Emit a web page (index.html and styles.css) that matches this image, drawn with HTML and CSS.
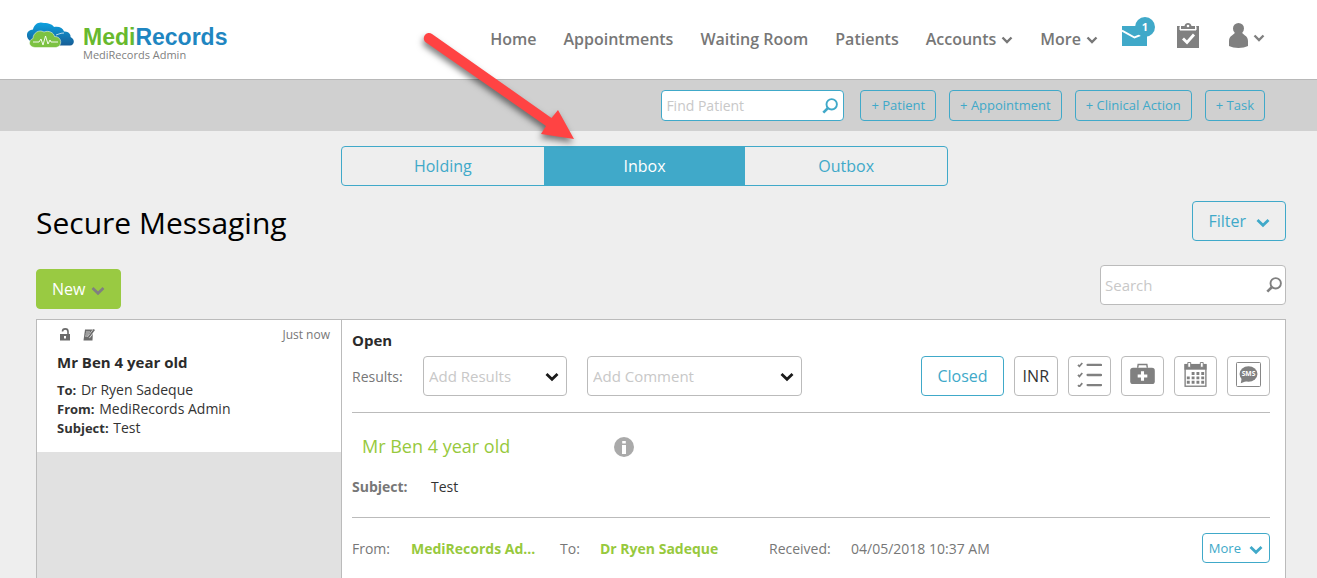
FILE: index.html
```html
<!DOCTYPE html>
<html lang="en">

<head>
    <meta charset="UTF-8">
    <meta name="viewport" content="width=device-width, initial-scale=1.0">
    <title>MediRecords - Secure Messaging</title>
    <link rel="stylesheet" href="styles.css">
</head>

<body>

    <!-- shared icons -->
    <svg class="defs" width="0" height="0" aria-hidden="true">
        <symbol id="chevron" viewBox="0 0 12 8">
            <path d="M1.5 1.5 L6 6 L10.5 1.5" fill="none" stroke="currentColor" stroke-width="2.4" />
        </symbol>
        <symbol id="chevron-bold" viewBox="0 0 14 10">
            <path d="M1.5 2 L7 7.2 L12.5 2" fill="none" stroke="currentColor" stroke-width="2.8" />
        </symbol>
        <symbol id="glass" viewBox="0 0 16 16">
            <circle cx="9.7" cy="6.3" r="5.2" fill="none" stroke="currentColor" stroke-width="1.9" />
            <path d="M6 10 L1.3 14.7" stroke="currentColor" stroke-width="2.6" />
        </symbol>
    </svg>

    <header class="header">
        <a class="logo" href="#">
            <svg class="logo-cloud" viewBox="0 0 47 26" width="47" height="26" aria-hidden="true">
                <defs>
                    <linearGradient id="blue" x1="0" y1="0" x2="0" y2="1">
                        <stop offset="0" stop-color="#0da2e0" />
                        <stop offset="1" stop-color="#175d96" />
                    </linearGradient>
                </defs>
                <path fill="url(#blue)" d="M3 19 C-2 15 -1 8 6 7.500 C7 2 12 -1 17 1 C22 1 26 3 27 5 C32 4 36 6 37 9.500 C42 9 44 13 43.500 15 C48 17 48 23 43 23.500 L30 23.500 Z" />
                <path fill="none" stroke="#fff" stroke-width="0.700" d="M29 13 C32 12 34 11 37 11" />
                <path fill="#7cc242" stroke="#fff" stroke-width="0.500" d="M8 25.500 C1 25 1 18 6 16.500 C6 11 12 7 17 10 C22 8 27 11 27.500 14.500 C35 14 36 24.500 29 25.500 Z" />
                <path fill="none" stroke="#fff" stroke-width="0.900" d="M6 20 H12 L14 17 L16 23 L18.500 14 L21 22 L23 18 L24 20 H31" />
            </svg>
            <span class="logo-text">
                <span class="logo-name"><span class="logo-medi">Medi</span>Records</span>
                <span class="logo-user">MediRecords Admin</span>
            </span>
        </a>
        <nav class="menu">
            <a href="#">Home</a>
            <a href="#">Appointments</a>
            <a href="#">Waiting Room</a>
            <a href="#">Patients</a>
            <a href="#">Accounts <svg class="chevron"><use href="#chevron" /></svg></a>
            <a href="#">More <svg class="chevron"><use href="#chevron" /></svg></a>
        </nav>
        <div class="header-icons">
            <a class="mail" href="#" aria-label="Messages">
                <svg viewBox="0 0 25 20" width="25" height="20">
                    <rect width="25" height="20" fill="#40a9c9" />
                    <path d="M0 4.500 L12.500 11.500 L25 6.500" fill="none" stroke="#fff" stroke-width="2" />
                </svg>
                <span class="badge">1</span>
            </a>
            <a href="#" aria-label="Tasks">
                <svg viewBox="0 0 22 25" width="22" height="25">
                    <path fill="#808080" d="M0 3 H3 V7 H19 V3 H22 V25 H0 Z" />
                    <path fill="#808080" d="M4 3 H7.500 C8 -1 14 -1 14.500 3 H18 V6 H4 Z" />
                    <path fill="none" stroke="#fff" d="M3 3.500 V7 H19 V3.500" />
                    <circle cx="11" cy="3" r="1.300" fill="#fff" />
                    <path d="M6 15.500 L10 19.500 L17 11.500" fill="none" stroke="#fff" stroke-width="2.800" />
                </svg>
            </a>
            <a class="user" href="#" aria-label="My account">
                <svg viewBox="0 0 19 25" width="19" height="25">
                    <circle cx="9.500" cy="5.500" r="5.500" fill="#808080" />
                    <path fill="#808080" d="M6 9 H13 C13 12 19 12 19 18 V23 C14 25.500 5 25.500 0 23 V18 C0 12 6 12 6 9 Z" />
                </svg>
                <svg class="chevron"><use href="#chevron" /></svg>
            </a>
        </div>
    </header>

    <div class="toolbar">
        <form class="search find">
            <input type="text" placeholder="Find Patient" aria-label="Find Patient">
            <svg class="glass"><use href="#glass" /></svg>
        </form>
        <button class="btn btn-small">+ Patient</button>
        <button class="btn btn-small">+ Appointment</button>
        <button class="btn btn-small">+ Clinical Action</button>
        <button class="btn btn-small">+ Task</button>
    </div>

    <main class="main">
        <div class="tabs">
            <button class="tab">Holding</button>
            <button class="tab active">Inbox</button>
            <button class="tab">Outbox</button>
            <svg class="arrow" viewBox="0 0 170 130" width="170" height="130" aria-hidden="true">
                <path d="M6 15.500 L126 99 L121 107 L154 112 L138 83 L131.500 91 L12 7 A5 5 0 0 0 6 15.500 Z" fill="#ff4343" />
            </svg>
        </div>

        <div class="title-row">
            <h1>Secure Messaging</h1>
            <button class="btn">Filter <svg class="chevron-bold"><use href="#chevron-bold" /></svg></button>
        </div>

        <div class="action-row">
            <button class="btn btn-new">New <svg class="chevron-bold"><use href="#chevron-bold" /></svg></button>
            <form class="search">
                <input type="text" placeholder="Search" aria-label="Search">
                <svg class="glass"><use href="#glass" /></svg>
            </form>
        </div>

        <div class="mailbox">
            <div class="list">
                <div class="item">
                    <div class="item-top">
                        <svg viewBox="0 0 12 13" width="12" height="13">
                            <path fill="#6b6b6b" fill-rule="evenodd" d="M1 6 H11 V12.500 H1 Z M5 8 V10.500 H7 V8 Z" />
                            <path fill="none" stroke="#6b6b6b" stroke-width="1.600" d="M3.500 3.500 C3.500 0 9 0 9 3.500 V6" />
                        </svg>
                        <svg viewBox="0 0 12 13" width="12" height="13">
                            <path fill="#6b6b6b" d="M2 1.500 H10 L9.500 12.500 H0.500 Z" />
                            <path stroke="#fff" stroke-width="0.700" d="M3 4 H7 M2.500 6 H6 M2 8 H5" />
                            <path stroke="#fff" stroke-width="2.800" d="M5.500 9.500 L11 2" />
                            <path stroke="#6b6b6b" stroke-width="1.800" d="M5.200 9.800 L11.300 1.500" />
                        </svg>
                        <span class="time">Just now</span>
                    </div>
                    <h2>Mr Ben 4 year old</h2>
                    <p><b>To:</b> Dr Ryen Sadeque</p>
                    <p><b>From:</b> MediRecords Admin</p>
                    <p><b>Subject:</b> Test</p>
                </div>
            </div>

            <div class="detail">
                <h3>Open</h3>
                <div class="results">
                    <label for="results">Results:</label>
                    <div class="select select-results">
                        <select id="results">
                            <option>Add Results</option>
                        </select>
                        <svg class="chevron-bold"><use href="#chevron-bold" /></svg>
                    </div>
                    <div class="select select-comment">
                        <select aria-label="Add Comment">
                            <option>Add Comment</option>
                        </select>
                        <svg class="chevron-bold"><use href="#chevron-bold" /></svg>
                    </div>
                    <div class="tools">
                        <button class="btn">Closed</button>
                        <button class="tool">INR</button>
                        <button class="tool" aria-label="Checklist">
                            <svg viewBox="0 0 26 26" width="25" height="25" fill="none" stroke="#808080">
                                <path stroke-width="2.400" stroke-linecap="round" d="M11 3 H25 M11 13.500 H25 M11 24 H25" />
                                <path stroke-width="1.800" d="M1 3 L2.500 4.500 L5.500 1 M1 13.500 L2.500 15 L5.500 11.500 M1 24 L2.500 25.500 L5.500 22" />
                            </svg>
                        </button>
                        <button class="tool" aria-label="Medical kit">
                            <svg viewBox="0 0 26 26" width="25" height="25">
                                <rect x="0.200" y="6" width="25.600" height="17" rx="3" fill="#808080" />
                                <path fill="none" stroke="#808080" stroke-width="1.500" d="M8 6 L8.500 2.500 H17.500 L18 6" />
                                <path stroke="#fff" stroke-width="3.200" d="M8 14.500 H18 M13 9.500 V19.500" />
                            </svg>
                        </button>
                        <button class="tool" aria-label="Calendar">
                            <svg viewBox="0 0 26 26" width="25" height="25">
                                <path fill="#808080" d="M1.500 2 H24.500 V8 H1.500 Z" />
                                <rect x="2.200" y="3" width="21.600" height="22.200" fill="none" stroke="#808080" stroke-width="1.400" />
                                <path fill="#fff" stroke="#808080" d="M5 0.500 H8 V5.500 H5 Z M18 0.500 H21 V5.500 H18 Z" />
                                <path stroke="#808080" stroke-width="3" stroke-dasharray="3 2" d="M9 12 H22 M4 16.500 H22 M4 21 H22" />
                            </svg>
                        </button>
                        <button class="tool" aria-label="Send SMS">
                            <svg viewBox="0 0 26 26" width="25" height="25">
                                <rect x="0.500" y="0.500" width="25" height="25" rx="1" fill="none" stroke="#808080" />
                                <ellipse cx="13" cy="12.500" rx="9.300" ry="8" fill="#808080" />
                                <path fill="#808080" d="M6 16 L5 22 L13 19 Z" />
                                <text class="sms" x="13" y="15" text-anchor="middle">SMS</text>
                            </svg>
                        </button>
                    </div>
                </div>

                <div class="patient">
                    <div class="patient-name">
                        <a href="#">Mr Ben 4 year old</a>
                        <svg viewBox="0 0 20 20" width="20" height="20">
                            <circle cx="10" cy="10" r="10" fill="#aaa" />
                            <path fill="#fff" d="M8.200 4 H11.800 V6.500 H8.200 Z M8 8 H12 V17 H8 Z" />
                        </svg>
                    </div>
                    <div class="subject"><b>Subject:</b><span>Test</span></div>
                </div>

                <div class="message">
                    <span class="from-label">From:</span>
                    <a class="from" href="#">MediRecords Ad...</a>
                    <span class="to-label">To:</span>
                    <a class="to" href="#">Dr Ryen Sadeque</a>
                    <span class="received">Received:</span>
                    <span>04/05/2018 10:37 AM</span>
                    <button class="btn btn-more">More <svg class="chevron-bold"><use href="#chevron-bold" /></svg></button>
                </div>
            </div>
        </div>
    </main>

</body>

</html>
```

FILE: styles.css
```css
* {
    margin: 0;
    padding: 0;
    box-sizing: border-box;
}

body {
    min-height: 100vh;
    display: flex;
    flex-direction: column;
    font-family: "Open Sans", sans-serif;
    font-size: 14px;
    line-height: 19px;
    color: #333;
    background-color: #eee;
}

a {
    color: inherit;
    text-decoration: none;
}

button,
input,
select {
    font: inherit;
    color: inherit;
}

button {
    cursor: pointer;
}

svg {
    flex: none;
}

.defs {
    position: absolute;
}

.chevron {
    width: 12px;
    height: 8px;
}

.chevron-bold {
    width: 14px;
    height: 10px;
}

.glass {
    width: 16px;
    height: 16px;
}

/* header */
.header {
    height: 80px;
    padding: 0 52px 0 27px;
    display: flex;
    align-items: center;
    background-color: #fff;
    border-bottom: 1px solid #b8b8b8;
}

.logo {
    display: flex;
    gap: 9px;
    margin-right: auto;
    padding-top: 3px;
}

.logo-text {
    display: flex;
    flex-direction: column;
    padding-top: 4px;
}

.logo-name {
    font-family: "Liberation Sans", Arial, sans-serif;
    font-size: 23px;
    font-weight: bold;
    line-height: 23px;
    color: #1f86c1;
}

.logo-medi {
    color: #68b92e;
}

.logo-user {
    font-size: 11px;
    line-height: 12px;
    color: #808080;
}

.menu {
    display: flex;
    gap: 27px;
    font-size: 16px;
    font-weight: 600;
    color: #777;
}

.menu a {
    display: flex;
    align-items: center;
    gap: 5px;
}

.header-icons {
    display: flex;
    align-items: center;
    gap: 30px;
    margin-left: 24px;
    padding-bottom: 8px;
    color: #808080;
}

.header-icons a {
    display: flex;
}

.mail {
    position: relative;
}

.badge {
    position: absolute;
    top: -9px;
    right: -8px;
    width: 20px;
    height: 20px;
    border-radius: 50%;
    background-color: #40a9c9;
    color: #fff;
    font-size: 11px;
    font-weight: bold;
    line-height: 20px;
    text-align: center;
}

.header-icons .user {
    align-items: center;
    gap: 5px;
}

.user .chevron {
    margin-top: 4px;
}

/* toolbar */
.toolbar {
    height: 51px;
    padding: 0 52px;
    display: flex;
    justify-content: flex-end;
    align-items: center;
    gap: 13px;
    background-color: #d0d0d0;
}

.search {
    width: 186px;
    height: 40px;
    padding: 0 3px 0 4px;
    display: flex;
    align-items: center;
    background-color: #fff;
    border: 1px solid #bbb;
    border-radius: 4px;
    font-size: 15px;
    color: #808080;
}

.search input {
    flex: 1;
    min-width: 0;
    border: none;
    outline: none;
    background: none;
}

.search input::placeholder {
    color: #c8c8c8;
}

.find {
    height: 31px;
    width: 183px;
    margin-right: 3px;
    padding-right: 5px;
    border-color: #40a9c9;
    font-size: 14px;
    color: #40a9c9;
}

.btn {
    height: 40px;
    padding: 0 15px;
    display: flex;
    align-items: center;
    gap: 8px;
    background: none;
    border: 1px solid #40a9c9;
    border-radius: 4px;
    font-size: 16px;
    color: #40a9c9;
}

.btn svg {
    margin-top: 3px;
}

.btn-small {
    height: 31px;
    padding: 0 10px;
    font-size: 13px;
}

/* page */
.main {
    flex: 1;
    display: flex;
    flex-direction: column;
    padding: 15px 31px 0 36px;
}

.tabs {
    position: relative;
    display: flex;
    width: 607px;
    height: 40px;
    margin-left: 305px;
    border: 1px solid #40a9c9;
    border-radius: 4px;
}

.tab {
    flex: 1;
    border: none;
    background: none;
    font-size: 16px;
    color: #40a9c9;
}

.tab.active {
    background-color: #40a9c9;
    color: #fff;
}

/* arrow pointing at the inbox tab */
.arrow {
    position: absolute;
    left: 78px;
    top: -120px;
    pointer-events: none;
    filter: drop-shadow(-1px 4px 3px rgba(0, 0, 0, 0.5));
}

.title-row,
.action-row {
    display: flex;
    justify-content: space-between;
    align-items: center;
}

.title-row {
    height: 40px;
    margin-top: 15px;
}

.title-row .btn {
    gap: 10px;
}

h1 {
    padding-top: 4px;
    font-size: 30px;
    line-height: 40px;
    font-weight: normal;
    color: #000;
}

.action-row {
    height: 44px;
    margin: 24px 0 10px;
    align-items: flex-start;
}

.btn-new {
    align-self: flex-end;
    gap: 6px;
    background-color: #99ca42;
    border-color: #99ca42;
    color: #fff;
}

.btn-new svg {
    color: #808080;
}

/* mailbox */
.mailbox {
    flex: 1;
    display: grid;
    grid-template-columns: 304px 1fr;
    border: 1px solid #bbb;
    border-bottom: none;
    background-color: #fff;
}

.list {
    background-color: #e1e1e1;
}

.item {
    padding: 5px 11px 15px 20px;
    background-color: #fff;
}

.item-top {
    display: flex;
    align-items: center;
    gap: 12px;
    padding-left: 2px;
}

.time {
    margin-left: auto;
    font-size: 12px;
    color: #777;
}

h2,
h3 {
    font-size: 15px;
    line-height: 20px;
    color: #2b2b2b;
}

h2 {
    margin: 8px 0;
}

.item b {
    margin-right: 1px;
    font-size: 13px;
    line-height: 1;
}

.detail {
    padding: 10px 15px 15px 10px;
    border-left: 1px solid #bbb;
    color: #777;
}

.results {
    display: flex;
    align-items: center;
    padding: 6px 0 16px;
    border-bottom: 1px solid #bbb;
}

.results label {
    width: 71px;
}

.select {
    position: relative;
    height: 40px;
    margin-right: 20px;
}

.select-results {
    width: 144px;
}

.select-comment {
    width: 215px;
}

.select select {
    appearance: none;
    width: 100%;
    height: 100%;
    padding: 0 5px;
    background-color: #fff;
    border: 1px solid #bbb;
    border-radius: 4px;
    font-size: 15px;
    color: #c8c8c8;
}

.select svg {
    position: absolute;
    right: 8px;
    top: 16px;
    color: #1a1a1a;
    pointer-events: none;
}

.tools {
    display: flex;
    gap: 10px;
    margin-left: auto;
}

.tool {
    height: 40px;
    padding: 0 8px;
    background: #fff;
    border: 1px solid #bbb;
    border-radius: 4px;
    font-size: 16px;
    color: #333;
}

.tool svg {
    display: block;
    margin-bottom: 3px;
}

.sms {
    font-size: 7px;
    font-weight: bold;
    fill: #fff;
}

.patient {
    padding: 21px 0 21px;
    border-bottom: 1px solid #bbb;
}

.patient-name {
    display: flex;
    align-items: center;
    padding-left: 10px;
    font-size: 18px;
    line-height: 24px;
    color: #97c93d;
}

.patient-name a {
    width: 252px;
    padding-bottom: 2px;
}

.subject {
    display: flex;
    margin-top: 17px;
}

.subject b {
    width: 79px;
}

.subject span {
    color: #333;
}

.message {
    display: flex;
    align-items: center;
    padding-top: 15px;
}

.message a {
    font-weight: bold;
    color: #97c93d;
}

.from-label {
    width: 59px;
}

.from {
    width: 149px;
}

.to-label {
    width: 40px;
}

.to {
    width: 169px;
}

.received {
    width: 82px;
}

.btn-more {
    height: 30px;
    margin-left: auto;
    padding: 0 6px;
    font-size: 13px;
}
```
